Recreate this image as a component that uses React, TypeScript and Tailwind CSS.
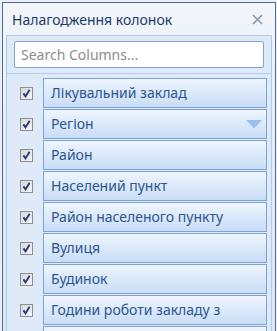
const columns = [
  { label: 'Лікувальний заклад' },
  { label: 'Регіон', dropdown: true },
  { label: 'Район' },
  { label: 'Населений пункт' },
  { label: 'Район населеного пункту' },
  { label: 'Вулиця' },
  { label: 'Будинок' },
  { label: 'Години роботи закладу з' },
  { label: '' },
]

function CheckMark() {
  return (
    <div className="flex h-[13px] w-[13px] shrink-0 items-center justify-center border border-[#8f8f8f] bg-gradient-to-br from-[#d8d8d8] to-[#f6f6f6]">
      <svg width="11" height="11" viewBox="0 0 11 11">
        <path d="M2.4 5.4 L4.5 8.4 L8.6 1.8" fill="none" stroke="#24397a" strokeWidth="1.9" />
      </svg>
    </div>
  )
}

export default function App() {
  return (
    <div
      className="h-[331px] w-[277px] overflow-hidden bg-[#e9eff7] pl-[2px] pt-[2px]"
      style={{ fontFamily: '"Noto Sans", "Open Sans", sans-serif' }}
    >
      <div className="h-[340px] w-[274px] border border-[#53698f] bg-gradient-to-b from-[#f2f6fb] via-[#e2ebf7] to-[#dae6f5]">
        {/* title bar */}
        <div className="flex h-[32px] items-center justify-between pl-[9px] pr-[12px] pt-[1px]">
          <span className="text-[14px] leading-none text-[#1e3a6c]">Налагодження колонок</span>
          <svg width="11" height="11" viewBox="0 0 11 11">
            <path d="M1 1 L10 10 M10 1 L1 10" stroke="#8a97aa" strokeWidth="1.6" />
          </svg>
        </div>

        {/* panel */}
        <div className="mx-[3px] h-[310px] border border-[#aecaec] bg-[#dfeaf8]">
          <div className="px-[7px] pb-[5px] pt-[5px]">
            <div className="flex h-[27px] items-center rounded-[2px] border border-[#7da1d2] bg-white px-[6px] text-[14px] text-[#8c8c8c]">
              Search Columns...
            </div>
          </div>
          <div className="h-px bg-[#b4cdeb]" />
          <div className="flex flex-col gap-px pt-[4px]">
            {columns.map((c, i) => (
              <div key={i} className="flex h-[30px] items-center">
                <div className="flex w-[36px] justify-center pl-[3px]">
                  <CheckMark />
                </div>
                <div className="flex h-[30px] w-[224px] items-center justify-between border border-[#7ea4d6] bg-gradient-to-b from-[#eef5fe] to-[#c9ddf6] pl-[7px] pr-[4px]">
                  <span className="text-[14px] leading-none text-[#2d558f]">{c.label}</span>
                  {c.dropdown && (
                    <svg width="16" height="9" viewBox="0 0 16 9">
                      <path d="M0 0 H16 L8 8.5 Z" fill="#9dc1ee" />
                    </svg>
                  )}
                </div>
              </div>
            ))}
          </div>
        </div>
      </div>
    </div>
  )
}
